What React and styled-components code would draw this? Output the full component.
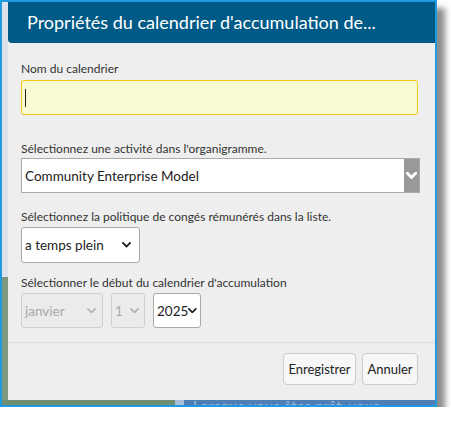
import React from "react";
import styled, { createGlobalStyle } from "styled-components";

const Global = createGlobalStyle`
  body {
    margin: 0;
    background: #ffffff;
    font-family: Lato, "Noto Sans", sans-serif;
  }
`;

const Frame = styled.div`
  width: 437px;
  height: 407px;
  box-sizing: border-box;
  border: 2px solid #1f9ae0;
  box-shadow: 8px 8px 6px rgba(0, 0, 0, 0.45);
  display: flex;
  flex-direction: column;
  overflow: hidden;
`;

const Upper = styled.div`
  flex: 1;
  display: flex;
  min-height: 0;
`;

const LeftStrip = styled.div`
  width: 6px;
  display: flex;
  flex-direction: column;
`;

const StripPart = styled.div`
  height: ${p => p.$h || "auto"};
  flex: ${p => (p.$h ? "none" : 1)};
  background: ${p => p.$bg};
`;

const BottomStrip = styled.div`
  height: 5px;
  display: flex;
  overflow: hidden;
`;

const StripBlock = styled.div`
  width: ${p => p.$w};
  flex: ${p => (p.$w ? "none" : 1)};
  background: ${p => p.$bg};
  overflow: hidden;
`;

const StripText = styled.div`
  margin: -1px 0 0 9px;
  font-size: 15px;
  line-height: 15px;
  color: #9bb9df;
  white-space: nowrap;
`;

const Dialog = styled.div`
  flex: 1;
  display: flex;
  flex-direction: column;
  background: #eeeeee;
`;

const Header = styled.div`
  height: 41px;
  background: #005a87;
  border-radius: 0 0 0 4px;
  display: flex;
  align-items: center;
  padding: 0 0 1px 19px;
  box-sizing: border-box;
`;

const Title = styled.h1`
  margin: 0;
  font-size: 18px;
  font-weight: 400;
  color: #ffffff;
  white-space: nowrap;
`;

const Content = styled.div`
  flex: 1;
  padding: 18px 15px 14px 13px;
  display: flex;
  flex-direction: column;
`;

const Field = styled.div`
  margin-top: ${p => p.$top || 0}px;
  display: flex;
  flex-direction: column;
  align-items: flex-start;
`;

const Label = styled.label`
  font-size: 12px;
  line-height: 16px;
  color: #333333;
  margin-bottom: ${p => p.$gap || 2}px;
`;

const TextInput = styled.div`
  align-self: stretch;
  margin-right: 2px;
  height: 35px;
  box-sizing: border-box;
  background: #fafad2;
  border: 1px solid #f2c811;
  border-radius: 3px;
  display: flex;
  align-items: center;
  padding-left: 3px;
`;

const Caret = styled.span`
  width: 1px;
  height: 18px;
  background: #222222;
`;

const WideSelect = styled.div`
  align-self: stretch;
  height: 35px;
  box-sizing: border-box;
  background: #ffffff;
  border: 1px solid #aaaaaa;
  display: flex;
  align-items: stretch;
`;

const WideValue = styled.span`
  flex: 1;
  display: flex;
  align-items: center;
  padding-left: 3px;
  font-size: 13.5px;
  color: #222222;
`;

const WideArrow = styled.span`
  width: 15px;
  background: #999999;
  display: flex;
  align-items: center;
  justify-content: center;
`;

const Row = styled.div`
  display: flex;
  gap: ${p => p.$gap || 8}px;
`;

const Select = styled.div`
  width: ${p => p.$w}px;
  height: ${p => p.$h || 35}px;
  box-sizing: border-box;
  background: ${p => (p.$disabled ? "#ebebeb" : "#ffffff")};
  border: 1px solid ${p => (p.$disabled ? "#cfcfcf" : "#a8a8a8")};
  border-radius: 3px;
  display: flex;
  align-items: center;
  justify-content: space-between;
  padding: 0 ${p => p.$pr || 4}px 0 3px;
  font-size: 13.5px;
  color: ${p => (p.$disabled ? "#a9a9a9" : "#222222")};
`;

const Footer = styled.div`
  border-top: 1px solid #dddddd;
  padding: 10px 17px 15px 0;
  display: flex;
  justify-content: flex-end;
  gap: 6px;
`;

const Button = styled.button`
  height: 32px;
  width: ${p => p.$w}px;
  padding: 0;
  background: #f7f7f7;
  border: 1px solid #cccccc;
  border-radius: 4px;
  font-family: inherit;
  font-size: 13px;
  color: #222222;
`;

function Chevron({ color = "#222", size = 9, stroke = 2 }) {
  return (
    <svg width={size} height={size * 0.6} viewBox="0 0 10 6">
      <path d="M1 1 L5 5 L9 1" fill="none" stroke={color} strokeWidth={stroke} strokeLinecap="round" strokeLinejoin="round" />
    </svg>
  );
}

function SelectField({ value, width, disabled, pr }) {
  return (
    <Select $w={width} $disabled={disabled} $pr={pr}>
      <span>{value}</span>
      <Chevron color={disabled ? "#b5b5b5" : "#222"} />
    </Select>
  );
}

export default function App() {
  return (
    <>
      <Global />
      <Frame>
        <Upper>
          <LeftStrip>
            <StripPart $h="275px" $bg="#dce2e9" />
            <StripPart $bg="#7d987e" />
          </LeftStrip>
          <Dialog>
            <Header>
              <Title>Propriétés du calendrier d'accumulation de...</Title>
            </Header>
            <Content>
              <Field>
                <Label $gap={3}>Nom du calendrier</Label>
                <TextInput>
                  <Caret />
                </TextInput>
              </Field>
              <Field $top={26}>
                <Label $gap={1}>Sélectionnez une activité dans l'organigramme.</Label>
                <WideSelect>
                  <WideValue>Community Enterprise Model</WideValue>
                  <WideArrow>
                    <Chevron color="#ffffff" size={11} stroke={2.6} />
                  </WideArrow>
                </WideSelect>
              </Field>
              <Field $top={16}>
                <Label>Sélectionnez la politique de congés rémunérés dans la liste.</Label>
                <Select $w={119} $h={36} $pr={8}>
                  <span>a temps plein</span>
                  <Chevron />
                </Select>
              </Field>
              <Field $top={12}>
                <Label>Sélectionner le début du calendrier d'accumulation</Label>
                <Row $gap={8}>
                  <SelectField value="janvier" width={82} disabled pr={6} />
                  <SelectField value="1" width={34} disabled pr={5} />
                  <SelectField value="2025" width={48} pr={3} />
                </Row>
              </Field>
            </Content>
            <Footer>
              <Button $w={73}>Enregistrer</Button>
              <Button $w={56}>Annuler</Button>
            </Footer>
          </Dialog>
        </Upper>
        <BottomStrip>
          <StripBlock $w="173px" $bg="#6f8f70" />
          <StripBlock $w="9px" $bg="#a9bfd9" />
          <StripBlock $bg="#4f7db4">
            <StripText>Lorsque vous êtes prêt, vous</StripText>
          </StripBlock>
        </BottomStrip>
      </Frame>
    </>
  );
}
